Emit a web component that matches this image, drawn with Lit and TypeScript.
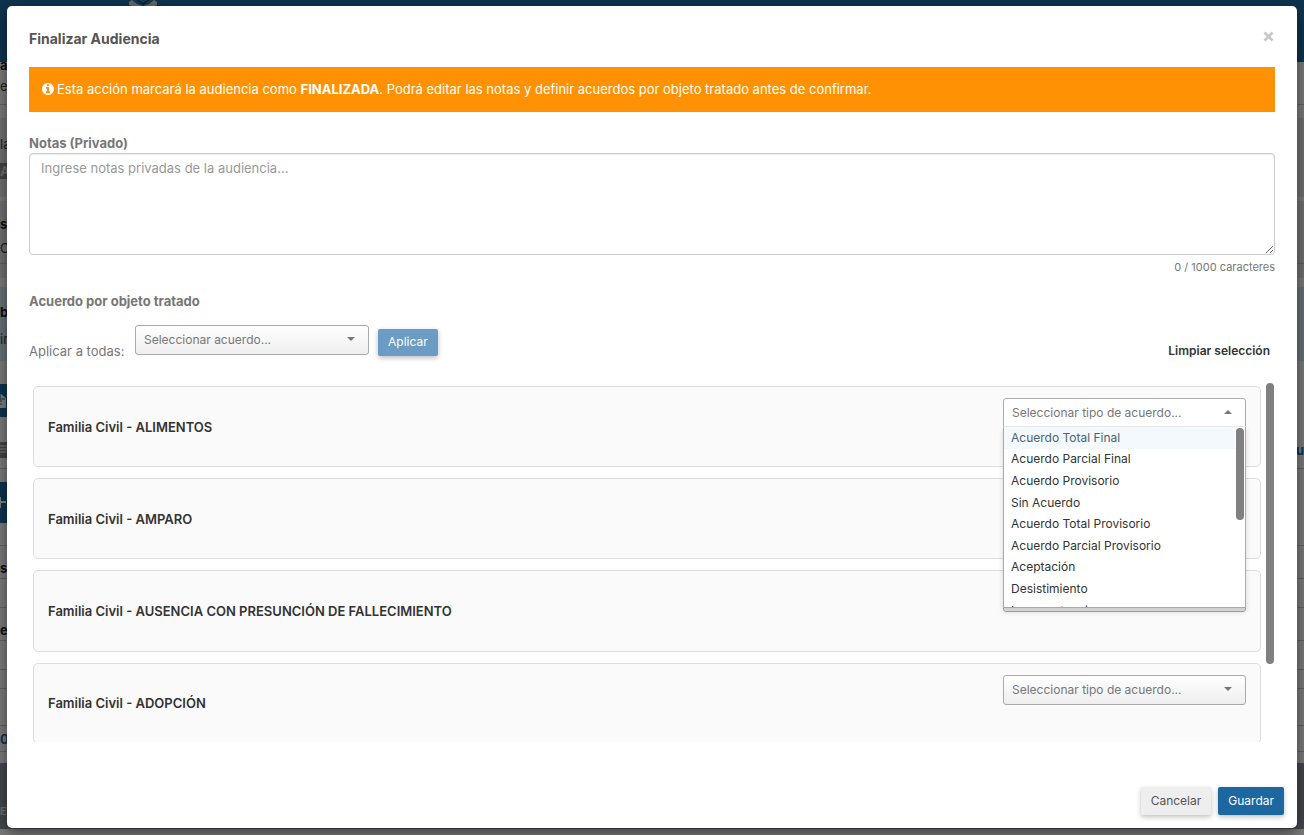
import { LitElement, html, css, svg } from "lit";
import { customElement, property, state } from "lit/decorators.js";
import { classMap } from "lit/directives/class-map.js";
import { styleMap } from "lit/directives/style-map.js";

const AGREEMENTS = [
  "Acuerdo Total Final",
  "Acuerdo Parcial Final",
  "Acuerdo Provisorio",
  "Sin Acuerdo",
  "Acuerdo Total Provisorio",
  "Acuerdo Parcial Provisorio",
  "Aceptación",
  "Desistimiento",
  "Incompetencia",
];

const SUBJECTS = [
  "Familia Civil - ALIMENTOS",
  "Familia Civil - AMPARO",
  "Familia Civil - AUSENCIA CON PRESUNCIÓN DE FALLECIMIENTO",
  "Familia Civil - ADOPCIÓN",
];

const arrow = svg`<path d="M0 0h8l-4 4z" fill="#777" />`;

@customElement("agreement-select")
class AgreementSelect extends LitElement {
  @property() placeholder = "";
  @property() label = "";
  @property({ type: Boolean }) open = false;

  static styles = css`
    :host { display: block; position: relative; }
    select {
      display: block; box-sizing: border-box; width: 100%; height: 30px;
      padding: 0 28px 0 8px; border: 1px solid #aaa; border-radius: 3px;
      background: linear-gradient(#fff, #eee); color: #777;
      font: 12px/16px Inter, sans-serif; appearance: none; outline: none;
    }
    .open select { background: #fff; border-radius: 3px 3px 0 0; }
    .arrow { position: absolute; right: 14px; top: 12px; width: 8px; height: 4px; pointer-events: none; }
    .open .arrow { transform: rotate(180deg); }
    .drop {
      position: absolute; z-index: 5; top: 28px; left: 0; right: 0; height: 182px;
      box-sizing: border-box; overflow: hidden; background: #fff;
      border: 1px solid #aaa; border-top-color: #e4e8eb; box-shadow: 0 4px 5px rgba(0, 0, 0, 0.15);
      display: flex; align-items: flex-start;
    }
    ul {
      flex: 1; margin: 0; padding: 0; list-style: none; height: 216px;
      display: grid; grid-template-rows: repeat(10, 1fr);
    }
    li {
      display: flex; align-items: center; padding-left: 7px;
      font: 12px/16px Inter, sans-serif; color: #333;
    }
    li.active { background: #f3f9fd; color: #4b6370; }
    .thumb { width: 8px; height: 92px; margin: 1px 1px 0; border-radius: 4px; background: #808080; }
  `;

  render() {
    return html`
      <div class=${classMap({ open: this.open })}>
        <select aria-label=${this.label}>
          <option>${this.placeholder}</option>
          ${AGREEMENTS.map((a) => html`<option>${a}</option>`)}
        </select>
        <svg class="arrow" viewBox="0 0 8 4">${arrow}</svg>
        ${this.open
          ? html`<div class="drop">
              <ul role="listbox" aria-label=${this.label}>
                ${AGREEMENTS.map(
                  (a, i) => html`<li role="option" class=${classMap({ active: i === 0 })}>${a}</li>`
                )}
              </ul>
              <div class="thumb"></div>
            </div>`
          : ""}
      </div>
    `;
  }
}

const fileIcon = html`<svg viewBox="0 0 12 15"><path d="M0 1h7l5 4v10H0z" fill="#fff" /><path d="M1 8h7M1 11h7M6 1v5h5" stroke="#1c67a0" fill="none" /></svg>`;
const listIcon = html`<svg viewBox="0 0 12 15"><path d="M0 4h12M0 7h12M0 10h12" stroke="#fff" /></svg>`;
const plusIcon = html`<svg viewBox="0 0 12 15"><path d="M0 7h12M6 2v11" stroke="#fff" stroke-width="2" /></svg>`;

type Band = [height: number, classes?: string, content?: unknown, side?: unknown];

const BANDS: Band[] = [
  [6, "bold", "a"],
  [37, "line", "e"],
  [13],
  [13, "grey"],
  [26, "grey", "la"],
  [6, "grey"],
  [16, "grey", html`<div class="tag">Al</div>`],
  [18, "grey"],
  [4],
  [11, "grey"],
  [23, "grey bold", "s"],
  [26, "grey", "C"],
  [3, "grey line"],
  [14, "grey"],
  [9],
  [13, "blue"],
  [23, "blue bold", "b"],
  [4, "blue"],
  [23, "blue", "in"],
  [11, "blue"],
  [23],
  [33, "", html`<div class="btn">${fileIcon}</div>`],
  [25],
  [16, "", html`<div class="tag">${listIcon}</div>`, html`<a class="link" href="#">u</a>`],
  [11, "line"],
  [13],
  [41, "", html`<div class="btn">${plusIcon}</div>`],
  [23, "line"],
  [33, "line bold low", "s"],
  [29, "line"],
  [33, "line bold low", "e"],
  [29, "line"],
  [19, "line"],
  [37, "line"],
  [26, "line", html`<a class="link" href="#">0</a>`],
  [11],
  [66, "foot", "E"],
];

@customElement("case-page")
class CasePage extends LitElement {
  static styles = css`
    :host {
      display: block; height: 100%; overflow: hidden; background: #f7f7f7;
      font: 13px/16px Inter, sans-serif; color: #444;
    }
    header { height: 62px; background: #1e689e; display: flex; padding-left: 129px; }
    header svg { width: 28px; height: 7px; }
    .band {
      box-sizing: border-box; display: flex; align-items: center;
      justify-content: space-between; white-space: nowrap;
    }
    .line { border-bottom: 1px solid #c4c4c4; }
    .grey { background: #e2e2e2; }
    .blue { background: #cfe6f2; }
    .bold { font-weight: 700; color: #222; }
    .low { padding-top: 11px; }
    .tag { background: #888; color: #ddd; font-weight: 700; width: 40px; height: 16px; }
    .btn { background: #1c67a0; width: 40px; height: 100%; display: flex; align-items: center; color: #fff; }
    .band svg { width: 12px; height: 15px; }
    .btn svg { margin-left: -6px; }
    .link { color: #1c67a0; font-weight: 700; text-decoration: none; }
    .foot { background: #87919b; color: #ddd; align-items: flex-end; font-weight: 700; font-size: 11px; padding-bottom: 10px; }
  `;

  render() {
    return html`
      <header>
        <svg viewBox="0 0 28 7">
          <path d="M0 2L3 0 8 4 14 6 20 4 25 0 28 2V5L24 7H4L0 5z" fill="#ccc" />
          <path d="M4 0h20l-10 6z" fill="#2a7ab5" />
          <path d="M8 0l6 4 6-4" stroke="#114a75" stroke-width="2" fill="none" />
        </svg>
      </header>
      ${BANDS.map(
        ([height, classes = "", content = "", side = ""]) =>
          html`<div class="band ${classes}" style=${styleMap({ height: `${height}px` })}>
            ${content}${side}
          </div>`
      )}
    `;
  }
}

@customElement("app-root")
class AppRoot extends LitElement {
  @state() notes = "";

  static styles = css`
    :host { display: block; position: relative; height: 100vh; overflow: hidden; font: 13px/20px Inter, sans-serif; color: #777; }
    .overlay {
      position: absolute; inset: 0; box-sizing: border-box; padding: 6px 7px 7px;
      background: rgba(0, 0, 0, 0.5); display: flex;
    }
    .modal {
      flex: 1; display: flex; flex-direction: column; background: #fff; border-radius: 5px;
      box-shadow: 0 5px 15px rgba(0, 0, 0, 0.5); min-width: 0;
    }
    .head { display: flex; justify-content: space-between; align-items: center; padding: 20px 22px 16px; }
    h2 { margin: 0; font-size: 14px; line-height: 25px; font-weight: 700; color: #555; }
    button { font: 12px/16px Inter, sans-serif; border: 0; cursor: pointer; }
    .close { background: none; padding: 0; width: 13px; height: 25px; }
    .close svg { display: block; width: 11px; height: 11px; margin: 0 auto 4px; }
    .body { padding: 0 22px; flex: 1; min-height: 0; display: flex; flex-direction: column; }
    .alert { display: flex; align-items: center; gap: 3px; background: #ff9104; color: #fff; padding: 12px 13px 13px; }
    .alert svg { width: 12px; height: 12px; flex: none; }
    label, .title { font-weight: 700; line-height: 18px; }
    .notes { margin-top: 22px; }
    .notes label { display: block; margin-bottom: 1px; }
    textarea {
      display: block; box-sizing: border-box; width: 100%; height: 102px; padding: 4px 11px;
      border: 1px solid #ccc; border-radius: 4px; box-shadow: inset 0 1px 1px rgba(0, 0, 0, 0.08);
      font: 13px/20px Inter, sans-serif; color: #555; outline: none; resize: both;
    }
    textarea::placeholder { color: #999; }
    .count { text-align: right; font-size: 11px; line-height: 16px; margin-top: 4px; }
    .title { margin: 17px 0 15px; font-size: 13px; }
    .bulk { display: flex; align-items: flex-start; }
    .bulk .name { width: 106px; padding-top: 16px; }
    .bulk agreement-select { width: 234px; }
    .btn { padding: 6px 10px; border-radius: 2px; box-shadow: 0 2px 5px rgba(0, 0, 0, 0.25); height: 28px; }
    .apply { margin: 4px 0 0 9px; height: 27px; background: #6b9cc3; color: #fff; padding: 5px 10px 6px; }
    .clear { margin-left: auto; background: none; padding: 18px 5px 8px; font-weight: 600; color: #333; }
    .list { margin-top: 16px; height: 359px; display: flex; justify-content: space-between; overflow: hidden; padding: 0 1px 0 4px; }
    .cards { flex: 1; height: 450px; margin: 3px 5px 0 0; display: grid; grid-template-rows: repeat(5, 1fr); gap: 11px; }
    .card {
      display: flex; justify-content: space-between; align-items: center; background: #fafafa;
      border: 1px solid #ddd; border-radius: 5px; padding: 0 14px; font-weight: 600; color: #333;
    }
    .card agreement-select { width: 243px; align-self: flex-start; margin-top: 11px; }
    .thumb { width: 8px; height: 281px; border-radius: 4px; background: #808080; }
    .foot { display: flex; justify-content: flex-end; gap: 7px; padding: 13px; }
    .cancel { background: #eee; color: #555; }
    .save { background: #1c67a0; color: #fff; }
  `;

  render() {
    return html`
      <case-page></case-page>
      <div class="overlay">
        <div class="modal" role="dialog" aria-labelledby="title">
          <div class="head">
            <h2 id="title">Finalizar Audiencia</h2>
            <button class="close" aria-label="Cerrar">
              <svg viewBox="0 0 11 11"><path d="M1.500 1.500l8 8M9.500 1.500l-8 8" stroke="#c8c8c8" stroke-width="2.800" /></svg>
            </button>
          </div>
          <div class="body">
            <div class="alert">
              <svg viewBox="128 128 1536 1536"><path fill="#fff" d="M1152 1376v-160q0-14-9-23t-23-9h-96v-512q0-14-9-23t-23-9h-320q-14 0-23 9t-9 23v160q0 14 9 23t23 9h96v320h-96q-14 0-23 9t-9 23v160q0 14 9 23t23 9h448q14 0 23-9t9-23zm-128-896v-160q0-14-9-23t-23-9h-192q-14 0-23 9t-9 23v160q0 14 9 23t23 9h192q14 0 23-9t9-23zm640 416q0 209-103 385.500t-279.500 279.500-385.500 103-385.500-103-279.500-279.500-103-385.500 103-385.500 279.500-279.500 385.500-103 385.500 103 279.500 279.500 103 385.500z" /></svg>
              <span>Esta acción marcará la audiencia como <b>FINALIZADA</b>. Podrá editar las notas y definir acuerdos por objeto tratado antes de confirmar.</span>
            </div>
            <div class="notes">
              <label for="notes">Notas (Privado)</label>
              <textarea id="notes" maxlength="1000" placeholder="Ingrese notas privadas de la audiencia..."
                @input=${(e: Event) => (this.notes = (e.target as HTMLTextAreaElement).value)}></textarea>
              <div class="count">${this.notes.length} / 1000 caracteres</div>
            </div>
            <h3 class="title">Acuerdo por objeto tratado</h3>
            <div class="bulk">
              <span class="name">Aplicar a todas:</span>
              <agreement-select label="Aplicar a todas" placeholder="Seleccionar acuerdo..."></agreement-select>
              <button class="btn apply">Aplicar</button>
              <button class="clear">Limpiar selección</button>
            </div>
            <div class="list">
              <div class="cards">
                ${SUBJECTS.map(
                  (s, i) => html`<div class="card">
                    <span>${s}</span>
                    <agreement-select label=${s} placeholder="Seleccionar tipo de acuerdo..." ?open=${i === 0}></agreement-select>
                  </div>`
                )}
              </div>
              <div class="thumb"></div>
            </div>
          </div>
          <div class="foot">
            <button class="btn cancel">Cancelar</button>
            <button class="btn save">Guardar</button>
          </div>
        </div>
      </div>
    `;
  }
}
